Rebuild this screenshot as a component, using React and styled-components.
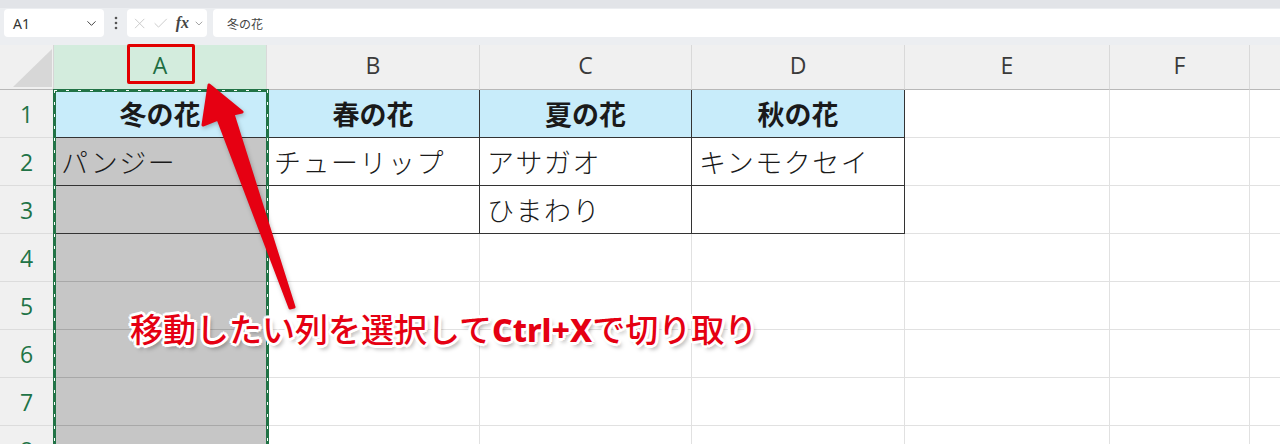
import React from 'react'
import styled, { createGlobalStyle } from 'styled-components'
import { ChevronDown, X, Check } from 'lucide-react'

const GlobalStyle = createGlobalStyle`
  body {
    margin: 0;
    background: #ffffff;
    overflow: hidden;
  }
`

const Page = styled.div`
  position: relative;
  width: 1280px;
  height: 444px;
  overflow: hidden;
  font-family: "Noto Sans", "Noto Sans CJK JP", sans-serif;
`

const TopBar = styled.div`
  height: 45px;
  box-sizing: border-box;
  background: #eceef1;
  border-top: 8px solid #e2e4e8;
  display: flex;
  align-items: flex-start;
  padding: 1px 0 0 4px;
`

const NameBox = styled.div`
  width: 100px;
  height: 28px;
  box-sizing: border-box;
  background: #ffffff;
  border-radius: 4px;
  display: flex;
  align-items: center;
  justify-content: space-between;
  padding: 0 5px 0 9px;
  font-size: 14px;
  color: #333;
`

const Kebab = styled.div`
  width: 23px;
  height: 28px;
  display: flex;
  align-items: center;
  justify-content: center;
`

const FxBox = styled.div`
  width: 80px;
  height: 28px;
  box-sizing: border-box;
  background: #ffffff;
  border-radius: 4px;
  display: flex;
  align-items: center;
  gap: 4px;
  padding: 0 2px 0 4px;
  color: #c4c4c4;
`

const Fx = styled.span`
  font-family: "Liberation Serif", "DejaVu Serif", serif;
  font-style: italic;
  font-weight: 700;
  font-size: 16px;
  color: #444;
  margin-left: 2px;
`

const FormulaInput = styled.div`
  flex: 1;
  margin-left: 6px;
  height: 28px;
  background: #ffffff;
  border-radius: 4px 0 0 4px;
  display: flex;
  align-items: center;
  padding-left: 14px;
  font-family: "Noto Sans CJK JP", sans-serif;
  font-size: 12px;
  color: #444;
`

const Sheet = styled.div`
  display: grid;
  grid-template-columns: 54px 213px 213px 212px 213px 205px 140px 140px;
  grid-template-rows: 45px repeat(8, 48px);
`

const Corner = styled.div`
  background: #f0f0f0;
  border-right: 1px solid #d6d6d6;
  border-bottom: 1px solid #b8b8b8;
  box-sizing: border-box;
  position: relative;

  &::after {
    content: '';
    position: absolute;
    left: 13px;
    top: 4px;
    width: 39px;
    height: 38px;
    background: #d7d7d7;
    clip-path: polygon(100% 0, 100% 100%, 0 100%);
  }
`

const ColHead = styled.div`
  box-sizing: border-box;
  background: ${p => (p.$selected ? '#d3ecdd' : '#f0f0f0')};
  border-right: 1px solid #d9d9d9;
  border-bottom: 1px solid #b8b8b8;
  display: flex;
  align-items: center;
  justify-content: center;
  padding-bottom: 5px;
  font-family: "Open Sans", "Noto Sans", sans-serif;
  font-size: 23px;
  color: ${p => (p.$selected ? '#1e6e42' : '#3a3a3a')};
`

const RowHead = styled.div`
  box-sizing: border-box;
  background: #f0f0f0;
  border-right: 1px solid #d6d6d6;
  border-bottom: 1px solid #dcdcdc;
  display: flex;
  align-items: center;
  justify-content: center;
  font-family: "Open Sans", "Noto Sans", sans-serif;
  font-size: 23px;
  color: #217346;
`

const cellStyles = {
  head: { bg: '#c8ecfa', right: '#333', bottom: '#333' },
  table: { bg: '#ffffff', right: '#333', bottom: '#333' },
  cutTable: { bg: '#c6c6c6', right: '#333', bottom: '#333' },
  cut: { bg: '#c6c6c6', right: '#aaa', bottom: '#a8a8a8' },
  plain: { bg: '#ffffff', right: '#e1e1e1', bottom: '#e1e1e1' },
}

const Cell = styled.div`
  box-sizing: border-box;
  background: ${p => cellStyles[p.$kind].bg};
  border-right: 1px solid ${p => cellStyles[p.$kind].right};
  border-bottom: 1px solid ${p => cellStyles[p.$kind].bottom};
  display: flex;
  align-items: center;
  justify-content: ${p => (p.$kind === 'head' ? 'center' : 'flex-start')};
  padding-left: ${p => (p.$kind === 'head' ? '0' : '7px')};
  font-family: "Noto Sans CJK JP", sans-serif;
  font-size: 27px;
  font-weight: ${p => (p.$kind === 'head' ? 700 : 300)};
  letter-spacing: ${p => (p.$kind === 'head' ? '0' : '1.5px')};
  color: #1a1a1a;
  white-space: nowrap;
  overflow: hidden;
`

const Marquee = styled.div`
  position: absolute;
  left: 53px;
  top: 89px;
  width: 216px;
  height: 400px;
  box-sizing: border-box;
  border: 3px solid #217346;

  &::after {
    content: '';
    position: absolute;
    inset: -2px;
    background:
      repeating-linear-gradient(to bottom, #fff 0 3px, transparent 3px 12px) left top / 1px 100% no-repeat,
      repeating-linear-gradient(to bottom, #fff 0 3px, transparent 3px 12px) right top / 1px 100% no-repeat,
      repeating-linear-gradient(to right, #fff 0 3px, transparent 3px 12px) left top / 100% 1px no-repeat;
  }
`

const HeaderMark = styled.div`
  position: absolute;
  left: 127px;
  top: 44px;
  width: 68px;
  height: 40px;
  box-sizing: border-box;
  border: 3px solid #e20000;
  border-radius: 2px;
`

const ArrowLayer = styled.svg`
  position: absolute;
  left: 0;
  top: 0;
  pointer-events: none;
  filter: drop-shadow(1px 2px 2px rgba(0, 0, 0, 0.25));
`

const Callout = styled.div`
  position: absolute;
  left: 130px;
  top: 304px;
  font-family: "Noto Sans CJK JP", sans-serif;
  font-size: 33px;
  font-weight: 500;
  color: #e50012;
  white-space: nowrap;
  text-shadow:
    -2px -2px 0 #fff, 2px -2px 0 #fff, -2px 2px 0 #fff, 2px 2px 0 #fff,
    0 -3px 0 #fff, 0 3px 0 #fff, -3px 0 0 #fff, 3px 0 0 #fff,
    3px 4px 4px rgba(0, 0, 0, 0.35);
`

const Keys = styled.span`
  font-family: "Noto Sans", "Liberation Sans", sans-serif;
  font-weight: 800;
  font-size: 32px;
`

const columns = ['A', 'B', 'C', 'D', 'E', 'F', 'G']

const data = [
  ['冬の花', '春の花', '夏の花', '秋の花'],
  ['パンジー', 'チューリップ', 'アサガオ', 'キンモクセイ'],
  ['', '', 'ひまわり', ''],
]

function kindOf(row, col) {
  if (col === 0) {
    if (row === 0) return 'head'
    return row <= 2 ? 'cutTable' : 'cut'
  }
  if (col <= 3 && row === 0) return 'head'
  if (col <= 3 && row <= 2) return 'table'
  return 'plain'
}

function App() {
  const rows = Array.from({ length: 8 }, (_, i) => i)
  return (
    <Page>
      <GlobalStyle />
      <TopBar>
        <NameBox>
          A1
          <ChevronDown size={15} color="#444" strokeWidth={1.6} />
        </NameBox>
        <Kebab>
          <svg width="4" height="14" viewBox="0 0 4 14">
            <circle cx="2" cy="2" r="1.3" fill="#555" />
            <circle cx="2" cy="7" r="1.3" fill="#555" />
            <circle cx="2" cy="12" r="1.3" fill="#555" />
          </svg>
        </Kebab>
        <FxBox>
          <X size={19} strokeWidth={1.2} />
          <Check size={19} strokeWidth={1.2} />
          <Fx>fx</Fx>
          <ChevronDown size={13} color="#888" strokeWidth={1.6} />
        </FxBox>
        <FormulaInput>冬の花</FormulaInput>
      </TopBar>

      <Sheet>
        <Corner />
        {columns.map((c, i) => (
          <ColHead key={c} $selected={i === 0}>{i < 6 ? c : ''}</ColHead>
        ))}
        {rows.map(r => (
          <React.Fragment key={r}>
            <RowHead>{r + 1}</RowHead>
            {columns.map((c, ci) => (
              <Cell key={c} $kind={kindOf(r, ci)}>
                {(data[r] && data[r][ci]) || ''}
              </Cell>
            ))}
          </React.Fragment>
        ))}
      </Sheet>

      <Marquee />
      <HeaderMark />

      <ArrowLayer width="1280" height="444" viewBox="0 0 1280 444">
        <path
          d="M209 85 L242 112 L233 114 L294 307 L290 308 L218 119 L203 125 Z"
          fill="#e60012"
          stroke="#e60012"
          strokeWidth="3"
          strokeLinejoin="round"
        />
      </ArrowLayer>

      <Callout>
        移動したい列を選択して<Keys>Ctrl+X</Keys>で切り取り
      </Callout>
    </Page>
  )
}

export default App
